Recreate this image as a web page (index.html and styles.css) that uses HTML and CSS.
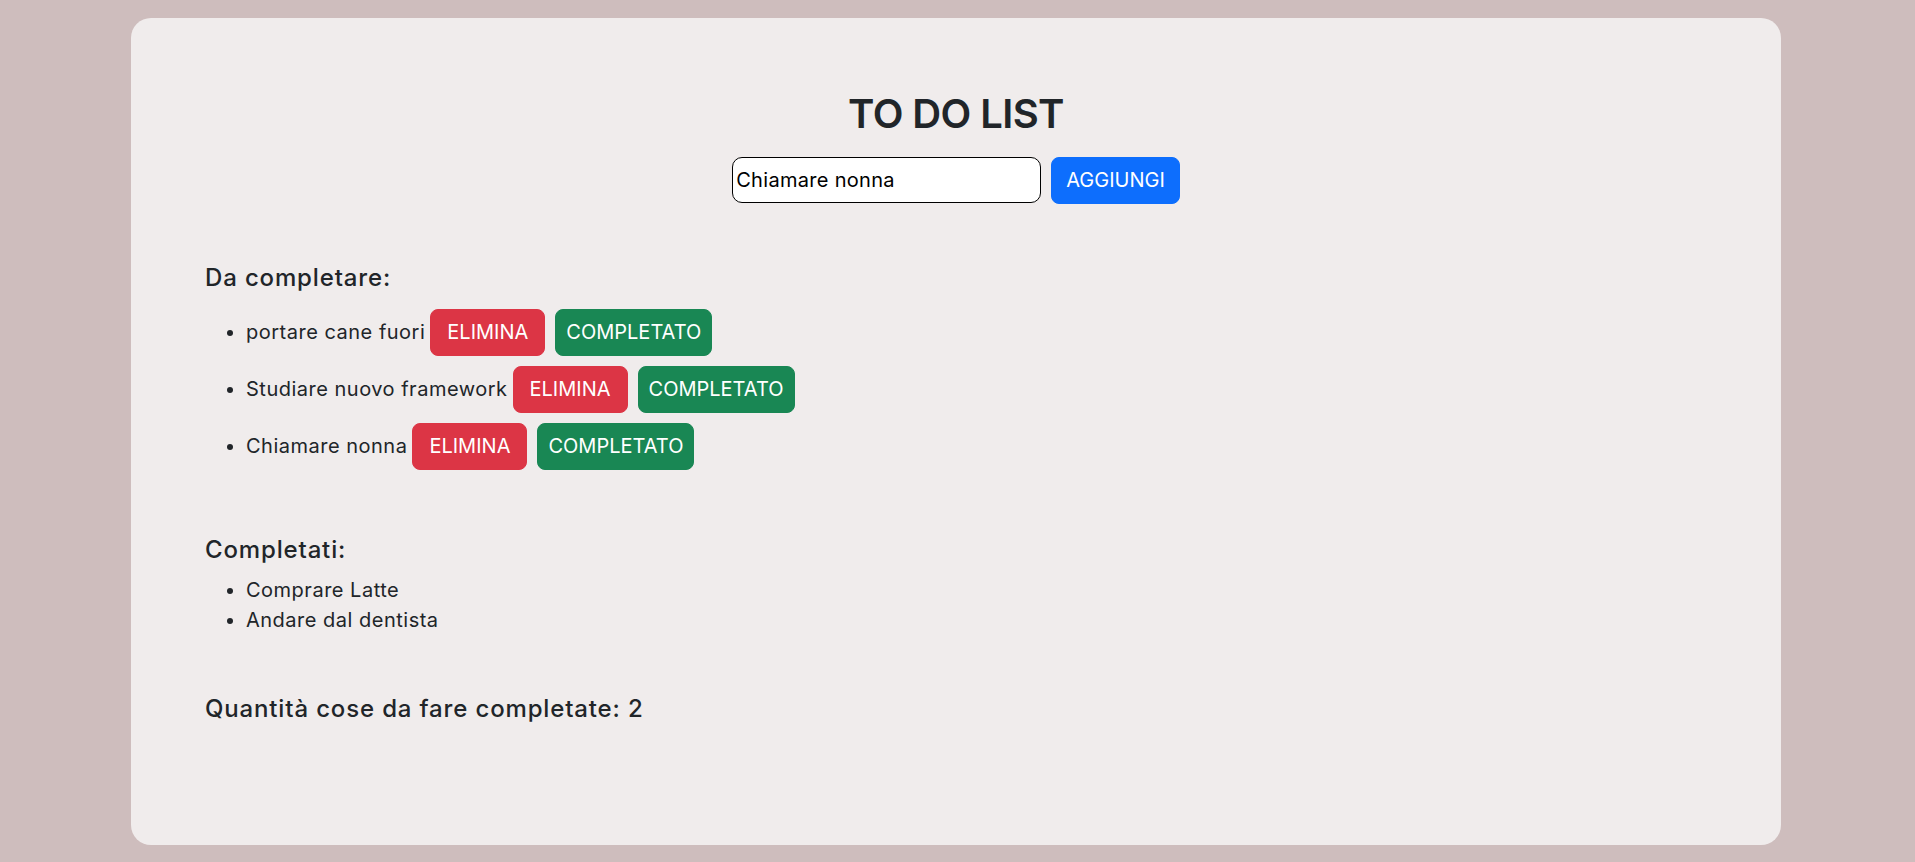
FILE: index.html
```html
<!DOCTYPE html>
<html lang="it">
<head>
<meta charset="utf-8">
<title>To Do List</title>
<link rel="stylesheet" href="styles.css">
</head>
<body>
<main class="card">
  <h1 class="title">TO DO LIST</h1>
  <form class="add-form">
    <input class="add-input" type="text" value="Chiamare nonna">
    <button class="btn btn-blue" type="button">AGGIUNGI</button>
  </form>

  <section class="section section-todo">
    <h2 class="section-title">Da completare:</h2>
    <ul class="todo-list">
      <li class="todo-item">portare cane fuori<button class="btn btn-red" type="button">ELIMINA</button><button class="btn btn-green" type="button">COMPLETATO</button></li>
      <li class="todo-item">Studiare nuovo framework<button class="btn btn-red" type="button">ELIMINA</button><button class="btn btn-green" type="button">COMPLETATO</button></li>
      <li class="todo-item">Chiamare nonna<button class="btn btn-red" type="button">ELIMINA</button><button class="btn btn-green" type="button">COMPLETATO</button></li>
    </ul>
  </section>

  <section class="section section-done">
    <h2 class="section-title">Completati:</h2>
    <ul class="done-list">
      <li>Comprare Latte</li>
      <li>Andare dal dentista</li>
    </ul>
  </section>

  <h2 class="section-title count">Quantità cose da fare completate: 2</h2>
</main>
</body>
</html>
```

FILE: styles.css
```css
* { box-sizing: border-box; }

html, body {
  margin: 0;
  padding: 0;
}

body {
  background: #cebdbd;
  font-family: Inter, "Liberation Sans", Arial, sans-serif;
  font-size: 20px;
  line-height: 1.5;
  color: #212529;
  padding: 18px 0 17px 0;
}

.card {
  width: 1650px;
  height: 827px;
  margin-left: 131px;
  background: #f0ecec;
  border-radius: 20px;
  padding: 72px 74px 0 74px;
}

.title {
  margin: 0;
  text-align: center;
  font-size: 40px;
  line-height: 48px;
  font-weight: 600;
  letter-spacing: -0.6px;
}

.add-form {
  display: flex;
  justify-content: center;
  align-items: flex-start;
  gap: 10px;
  margin: 19px 0 0 0;
}

.add-input {
  width: 309px;
  height: 46px;
  border: 1px solid #000;
  border-radius: 10px;
  background: #fff;
  padding: 0 2px 0 3px;
  font-family: inherit;
  font-size: 20px;
  letter-spacing: 0.3px;
  color: #000;
  outline: none;
}

.btn {
  display: inline-block;
  font-family: inherit;
  font-size: 20px;
  line-height: 29px;
  padding: 8px 16px;
  border: 1px solid transparent;
  border-radius: 8px;
  color: #fff;
  letter-spacing: 0;
  cursor: pointer;
  vertical-align: baseline;
}

.btn-blue { background: #0d6efd; border-color: #0d6efd; padding: 8px 14px; }
.btn-red { background: #dc3545; border-color: #dc3545; margin-left: 5px; }
.btn-green { background: #198754; border-color: #198754; margin-left: 10px; padding: 8px 10px; }

.section-title {
  margin: 0;
  font-size: 24px;
  line-height: 29px;
  font-weight: 500;
  letter-spacing: 0.85px;
}

.section-todo { margin-top: 59px; }
.section-todo .section-title { margin-bottom: 17px; }

.todo-list,
.done-list {
  margin: 0;
  padding-left: 41px;
  letter-spacing: 0.5px;
}

.todo-item + .todo-item { margin-top: 10px; }

.section-done { margin-top: 65px; }
.section-done .section-title { margin-bottom: 11px; }

.done-list li { line-height: 30px; }

.count { margin-top: 59px; }
```
